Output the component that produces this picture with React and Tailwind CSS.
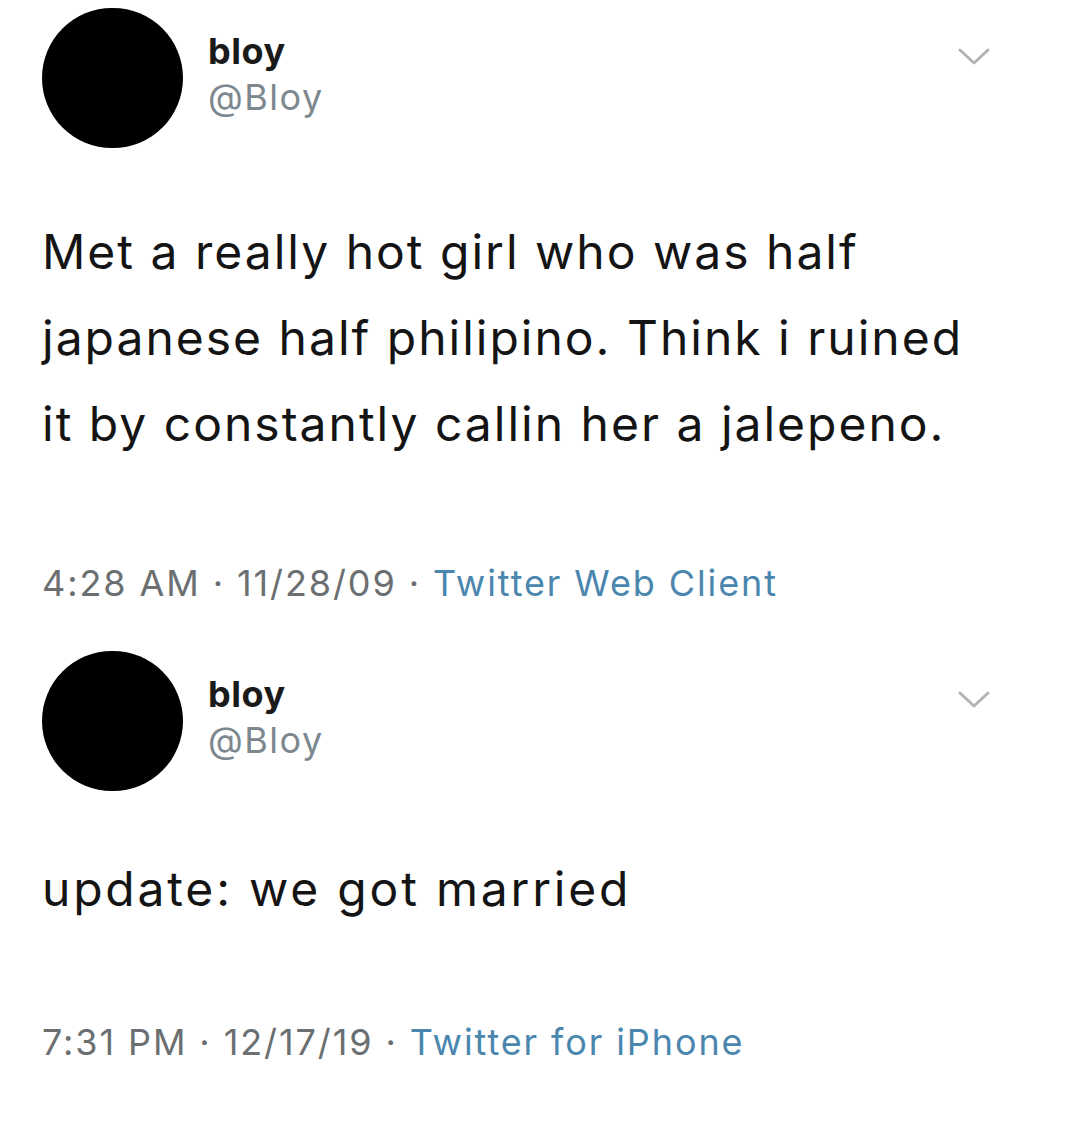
export default function App() {
  const Chevron = () => (
    <svg width="32" height="18" viewBox="0 0 32 18">
      <path d="M2 2 L16 15 L30 2" fill="none" stroke="#b3b3b3" strokeWidth="3" strokeLinecap="round" strokeLinejoin="round" />
    </svg>
  );
  const Header = () => (
    <div className="flex items-start">
      <div className="w-[141px] h-[140px] rounded-full bg-black shrink-0" />
      <div className="ml-[25px] flex flex-col pt-[20px]">
        <div className="text-[36px] leading-[46px] font-bold text-[#1a1a1a] tracking-[0.5px]">bloy</div>
        <div className="text-[36px] leading-[46px] text-[#7d878e] tracking-[1.5px]">@Bloy</div>
      </div>
      <div className="ml-auto mr-[98px] pt-[40px]">
        <Chevron />
      </div>
    </div>
  );
  return (
    <div className="w-[1088px] h-[1122px] bg-white pl-[42px] pt-[8px]" style={{ fontFamily: "Inter, 'Liberation Sans', sans-serif" }}>
      <Header />
      <div className="mt-[61px] text-[48px] leading-[86px] text-[#141414] tracking-[2px]">
        Met a really hot girl who was half
        <br />
        japanese half philipino. Think i ruined
        <br />
        it by constantly callin her a jalepeno.
      </div>
      <div className="mt-[93px] text-[36px] leading-[46px] text-[#6b6f72] tracking-[1.9px]">
        4:28 AM · 11/28/09 · <span className="text-[#4a86ad]">Twitter Web Client</span>
      </div>
      <div className="mt-[45px]">
        <Header />
      </div>
      <div className="mt-[55px] text-[48px] leading-[86px] text-[#141414] tracking-[2.8px]">
        update: we got married
      </div>
      <div className="mt-[87px] text-[36px] leading-[46px] text-[#6b6f72] tracking-[1.9px]">
        7:31 PM · 12/17/19 · <span className="text-[#4a86ad]">Twitter for iPhone</span>
      </div>
    </div>
  );
}
